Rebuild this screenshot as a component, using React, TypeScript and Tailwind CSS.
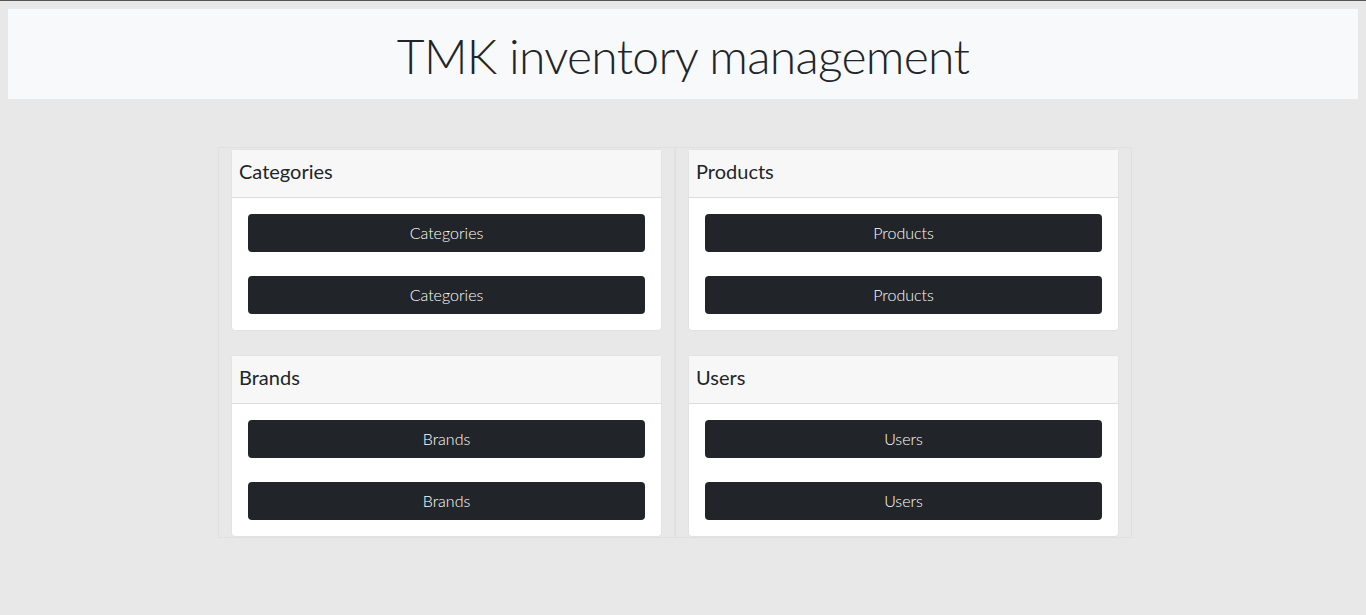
const sections = [
  ['Categories', 'Products'],
  ['Brands', 'Users'],
];

function Card({ title }: { title: string }) {
  return (
    <div className="rounded-[4px] border border-[#e2e2e2] bg-white">
      <div className="flex h-[48px] items-center border-b border-[#dcdcdc] bg-[#f7f7f7] px-[7px] pb-[6px] text-[20px] font-normal text-[#212529]">
        {title}
      </div>
      <div className="flex flex-col gap-[24px] p-[16px]">
        <button className="h-[38px] rounded-[4px] bg-[#212529] text-[16px] font-light text-white">{title}</button>
        <button className="h-[38px] rounded-[4px] bg-[#212529] text-[16px] font-light text-white">{title}</button>
      </div>
    </div>
  );
}

export default function App() {
  const left = sections.map((r) => r[0]);
  const right = sections.map((r) => r[1]);
  return (
    <div
      className="min-h-[615px] border-t border-[#555] bg-[#e8e8e8] px-[8px] pt-[8px]"
      style={{ fontFamily: 'Lato, "Open Sans", sans-serif' }}
    >
      <header className="flex h-[90px] items-center justify-center bg-[#f8f9fa] pt-[3px]">
        <h1 className="text-[48px] font-light tracking-[-0.7px] text-[#212529]">TMK inventory management</h1>
      </header>
      <div className="ml-[210px] mt-[48px] grid w-[914px] grid-cols-2">
        {[left, right].map((col, i) => (
          <div key={i} className="flex flex-col gap-[24px] border border-[#e0e0e0] px-[12px] pt-[1px]">
            {col.map((t) => (
              <Card key={t} title={t} />
            ))}
          </div>
        ))}
      </div>
    </div>
  );
}
